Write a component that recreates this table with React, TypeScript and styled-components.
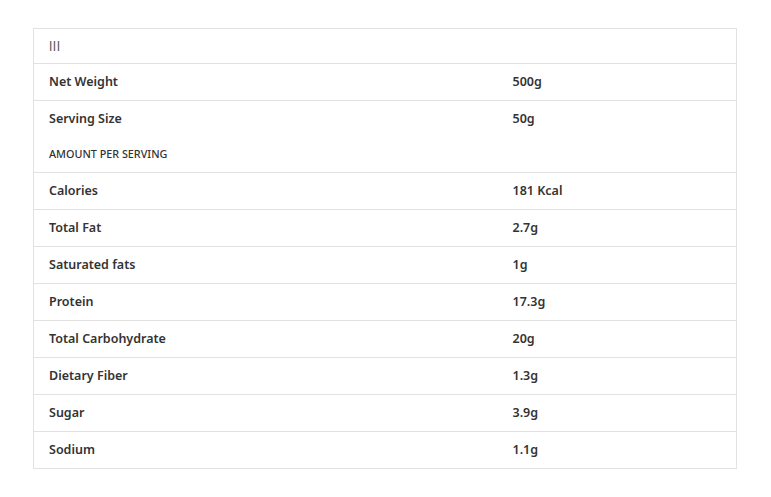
import React from 'react';
import styled, { createGlobalStyle } from 'styled-components';

type Row = { label: string; value?: string; kind?: 'section' | 'plain' };

const rows: Row[] = [
  { label: 'Net Weight', value: '500g' },
  { label: 'Serving Size', value: '50g', kind: 'plain' },
  { label: 'AMOUNT PER SERVING', kind: 'section' },
  { label: 'Calories', value: '181 Kcal' },
  { label: 'Total Fat', value: '2.7g' },
  { label: 'Saturated fats', value: '1g' },
  { label: 'Protein', value: '17.3g' },
  { label: 'Total Carbohydrate', value: '20g' },
  { label: 'Dietary Fiber', value: '1.3g' },
  { label: 'Sugar', value: '3.9g' },
  { label: 'Sodium', value: '1.1g' },
];

const App: React.FC = () => {
  return (
    <>
      <GlobalStyle />
      <Page>
        <Table>
          <colgroup>
            <LabelCol />
            <col />
          </colgroup>
          <thead>
            <tr>
              <HeadCell colSpan={2}>lll</HeadCell>
            </tr>
          </thead>
          <tbody>
            {rows.map((row) =>
              row.kind === 'section' ? (
                <tr key={row.label}>
                  <SectionCell colSpan={2}>{row.label}</SectionCell>
                </tr>
              ) : (
                <tr key={row.label}>
                  <Cell $noBorder={row.kind === 'plain'}>{row.label}</Cell>
                  <Cell $noBorder={row.kind === 'plain'}>{row.value}</Cell>
                </tr>
              )
            )}
          </tbody>
        </Table>
      </Page>
    </>
  );
};

export default App;

// Styled Components
const GlobalStyle = createGlobalStyle`
  body {
    margin: 0;
    background: #ffffff;
    font-family: 'Noto Sans', 'Open Sans', sans-serif;
    color: #333;
  }
`;

const Page = styled.div`
  padding: 28px 34px 28px 33px;
`;

const Table = styled.table`
  width: 704px;
  border-collapse: collapse;
  border: 1px solid #e2e2e2;
  table-layout: fixed;
  font-family: 'Noto Sans', 'Open Sans', sans-serif;
`;

const LabelCol = styled.col`
  width: 464px;
`;

const HeadCell = styled.th`
  height: 34px;
  padding: 0 15px;
  text-align: left;
  font-family: 'Noto Sans', sans-serif;
  font-size: 13px;
  font-weight: 400;
  letter-spacing: 0.5px;
  color: #555;
  border-bottom: 1px solid #e2e2e2;
`;

const Cell = styled.td<{ $noBorder?: boolean }>`
  height: 35px;
  padding: 0 15px 1px;
  font-size: 12.5px;
  font-weight: 600;
  color: #333;
  text-align: left;
  vertical-align: middle;
  border-bottom: ${(p) => (p.$noBorder ? 'none' : '1px solid #e2e2e2')};
`;

const SectionCell = styled.td`
  height: 33px;
  padding: 0 15px 2px;
  font-size: 10.8px;
  font-weight: 500;
  color: #333;
  text-transform: uppercase;
  border-bottom: 1px solid #e2e2e2;
`;
